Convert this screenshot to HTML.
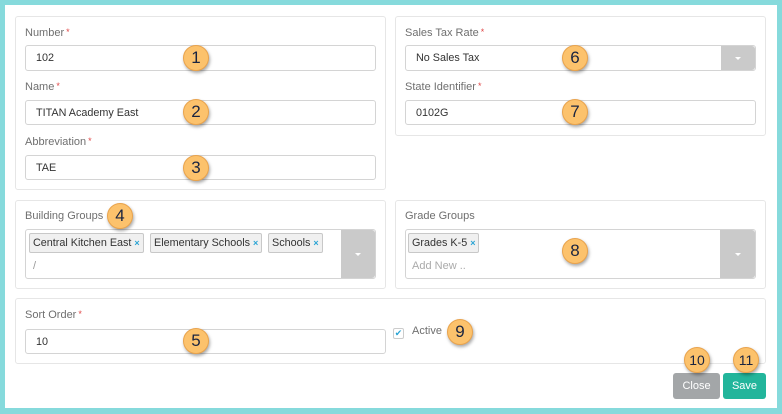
<!DOCTYPE html>
<html><head><meta charset="utf-8"><style>
*{box-sizing:border-box;margin:0;padding:0}
body{width:782px;height:414px;background:#86dadc;font-family:"Liberation Sans",sans-serif;position:relative;overflow:hidden}
.w{position:absolute;left:5px;top:5px;width:772px;height:403px;background:#fff}
.p{position:absolute;border:1px solid #e6e6e6;border-radius:3px;background:#fff}
.l{position:absolute;font-size:11px;color:#6f6f6f;top:0}
.l b{color:#e04848;font-weight:normal;font-size:9px;vertical-align:top;margin-left:2px}
.i{position:absolute;border:1px solid #d4d4d4;border-radius:3px;background:#fff;font-size:10.8px;color:#333;padding-left:10px;line-height:25px}
.dd{position:absolute;background:#cacaca;border-radius:0 3px 3px 0}
.dd:after{content:"";position:absolute;left:50%;top:50%;margin:-1px 0 0 -3px;border:3px solid transparent;border-top:3px solid #fff}
.t{position:absolute;top:3px;height:20px;border:1px solid #c8c8c8;border-radius:2px;background:#f0f0f0;font-size:10.8px;color:#333;padding:0 3px;line-height:18px;white-space:nowrap}
.t span{color:#2aa4d4;font-weight:bold;font-size:9px;margin-left:3px}
.n{position:absolute;width:26px;height:26px;border-radius:50%;background:#fcc26c;border:1px solid #e9a34c;box-shadow:1px 2px 3px rgba(0,0,0,.35);color:#1a2440;font-size:17px;text-align:center;line-height:24px}
.btn{position:absolute;top:373px;height:26px;border-radius:3px;color:#fff;font-size:11px;text-align:center;line-height:26px}
</style></head><body><div class="w"></div>
<div class="p" style="left:15px;top:16px;width:371px;height:174px"></div>
<div class="p" style="left:395px;top:16px;width:371px;height:120px"></div>
<div class="p" style="left:15px;top:200px;width:371px;height:89px"></div>
<div class="p" style="left:395px;top:200px;width:371px;height:89px"></div>
<div class="p" style="left:15px;top:298px;width:751px;height:66px"></div>

<div class="l" style="left:25px;top:27px">Number<b>*</b></div>
<div class="i" style="left:25px;top:45px;width:351px;height:26px">102</div>
<div class="l" style="left:25px;top:81px">Name<b>*</b></div>
<div class="i" style="left:25px;top:100px;width:351px;height:25px">TITAN Academy East</div>
<div class="l" style="left:25px;top:136px">Abbreviation<b>*</b></div>
<div class="i" style="left:25px;top:155px;width:351px;height:25px">TAE</div>

<div class="l" style="left:405px;top:27px">Sales Tax Rate<b>*</b></div>
<div class="i" style="left:405px;top:45px;width:351px;height:26px">No Sales Tax</div>
<div class="dd" style="left:721px;top:46px;width:34px;height:24px"></div>
<div class="l" style="left:405px;top:81px">State Identifier<b>*</b></div>
<div class="i" style="left:405px;top:100px;width:351px;height:25px">0102G</div>

<div class="l" style="left:25px;top:210px">Building Groups</div>
<div class="i" style="left:25px;top:229px;width:351px;height:50px;padding:0">
<div class="t" style="left:3px">Central Kitchen East<span>×</span></div>
<div class="t" style="left:124px">Elementary Schools<span>×</span></div>
<div class="t" style="left:242px">Schools<span>×</span></div>
<div style="position:absolute;left:7px;top:26px;color:#999;font-size:11px;line-height:20px">/</div>
</div>
<div class="dd" style="left:341px;top:230px;width:34px;height:48px"></div>

<div class="l" style="left:405px;top:210px">Grade Groups</div>
<div class="i" style="left:405px;top:229px;width:351px;height:50px;padding:0">
<div class="t" style="left:2px">Grades K-5<span>×</span></div>
<div style="position:absolute;left:6px;top:26px;color:#aaa;font-size:11px;line-height:20px">Add New ..</div>
</div>
<div class="dd" style="left:720px;top:230px;width:35px;height:48px"></div>

<div class="l" style="left:25px;top:309px">Sort Order<b>*</b></div>
<div class="i" style="left:25px;top:329px;width:361px;height:25px">10</div>
<div style="position:absolute;left:393px;top:328px;width:11px;height:11px;border:1px solid #ccc;border-radius:2px;color:#2aa4d4;font-size:9px;line-height:9px;text-align:center">✔</div>
<div class="l" style="left:412px;top:325px">Active</div>

<div class="btn" style="left:673px;width:47px;background:#a3a6a8">Close</div>
<div class="btn" style="left:723px;width:43px;background:#22b59b">Save</div>

<div class="n" style="left:183px;top:45px">1</div>
<div class="n" style="left:183px;top:99px">2</div>
<div class="n" style="left:183px;top:155px">3</div>
<div class="n" style="left:107px;top:203px">4</div>
<div class="n" style="left:183px;top:328px">5</div>
<div class="n" style="left:562px;top:45px">6</div>
<div class="n" style="left:562px;top:99px">7</div>
<div class="n" style="left:562px;top:238px">8</div>
<div class="n" style="left:447px;top:319px">9</div>
<div class="n" style="left:684px;top:347px;font-size:14px">10</div>
<div class="n" style="left:733px;top:347px;font-size:14px">11</div>
</body></html>
